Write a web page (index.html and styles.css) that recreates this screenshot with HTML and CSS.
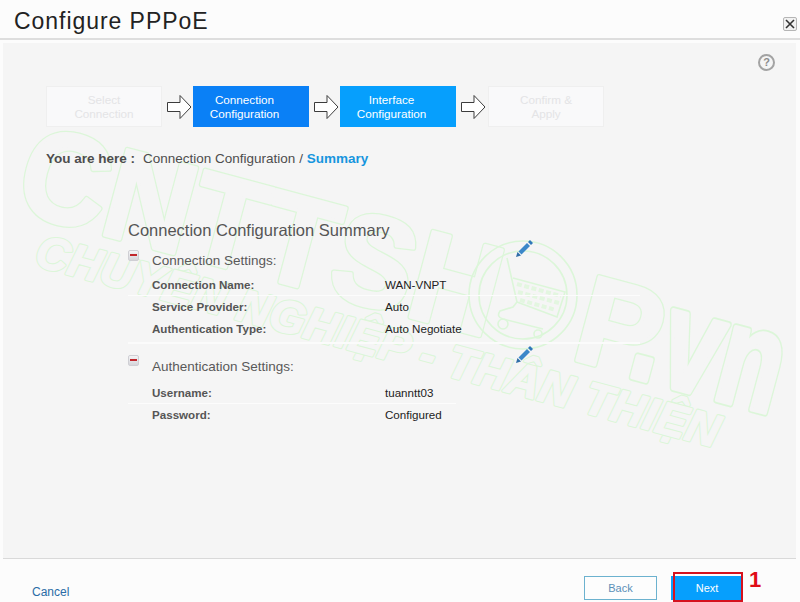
FILE: index.html
```html
<!DOCTYPE html>
<html lang="en">
<head>
<meta charset="utf-8">
<title>Configure PPPoE</title>
<link rel="stylesheet" href="styles.css">
</head>
<body>
<div class="dialog">
  <header class="header">
    <h1 class="title">Configure PPPoE</h1>
    <button class="close" aria-label="Close">
      <svg width="10" height="10" viewBox="0 0 10 10"><path d="M1 1L9 9M9 1L1 9" stroke="#333" stroke-width="1.6" fill="none"/></svg>
    </button>
  </header>
  <main class="panel">
    <svg class="watermark" width="793" height="515" viewBox="0 0 793 515">
      <defs>
        <g id="wm-letters">
          <text class="wm-big" transform="translate(9 167) rotate(15)" font-size="128" textLength="492" lengthAdjust="spacingAndGlyphs">CNTTSH</text>
          <text class="wm-big" transform="translate(566 315) rotate(15)" font-size="125">P</text>
          <text class="wm-big" transform="translate(622 332) rotate(15) scale(1 1.35)" font-size="105">.vn</text>
          <text class="wm-small" transform="translate(30 222) rotate(15)" font-size="46" textLength="706" lengthAdjust="spacing">CHUYÊN NGHIỆP - THÂN THIỆN</text>
        </g>
      </defs>
      <use href="#wm-letters" class="wm-outer"/>
      <use href="#wm-letters" class="wm-inner"/>
      <g class="wm-cart">
        <circle cx="520" cy="252" r="54"/>
        <circle cx="520" cy="252" r="44"/>
        <path d="M504 215L514 259L510 264L497 268Q493 274 500 276L540 286M510 235L562 249L554 274L514 259"/>
        <circle cx="500" cy="281" r="5"/>
        <circle cx="535" cy="291" r="4"/>
        <path class="wm-grid" d="M514 241L558 253M515 249L556 260M517 257L553 267"/>
      </g>
    </svg>
    <div class="help-row">
      <span class="help">?</span>
    </div>
    <nav class="steps">
      <div class="step step-off">Select<br>Connection</div>
      <svg class="arrow" width="24" height="24" viewBox="0 0 24 24"><path d="M.5 7.5H13V.5L24 12L13 23.5V16.5H.5Z"/></svg>
      <div class="step step-done">Connection<br>Configuration</div>
      <svg class="arrow" width="24" height="24" viewBox="0 0 24 24"><path d="M.5 7.5H13V.5L24 12L13 23.5V16.5H.5Z"/></svg>
      <div class="step step-active">Interface<br>Configuration</div>
      <svg class="arrow" width="24" height="24" viewBox="0 0 24 24"><path d="M.5 7.5H13V.5L24 12L13 23.5V16.5H.5Z"/></svg>
      <div class="step step-off">Confirm &amp;<br>Apply</div>
    </nav>
    <p class="crumb"><b>You are here :</b><span class="crumb-path">Connection Configuration / <b class="crumb-now">Summary</b></span></p>
    <section class="summary">
      <h2 class="summary-title">Connection Configuration Summary</h2>
      <div class="group group-conn">
        <div class="group-head">
          <span class="minus"></span>
          <span class="group-name">Connection Settings:</span>
          <svg class="pencil" width="17" height="17" viewBox="0 0 17 17"><path d="M0 17L1.5 12L5 15.5Z" fill="#2f6ea8"/><path d="M2.5 11.5L11 3L14 6L5.5 14.5Z" fill="#3b87c9"/><path d="M12 2L14 0L17 3L15 5Z" fill="#2f78ba"/></svg>
        </div>
        <div class="row row-line"><span class="key">Connection Name:</span><span>WAN-VNPT</span></div>
        <div class="row"><span class="key">Service Provider:</span><span>Auto</span></div>
        <div class="row"><span class="key">Authentication Type:</span><span>Auto Negotiate</span></div>
      </div>
      <div class="group group-auth">
        <div class="group-head">
          <span class="minus"></span>
          <span class="group-name">Authentication Settings:</span>
          <svg class="pencil" width="17" height="17" viewBox="0 0 17 17"><path d="M0 17L1.5 12L5 15.5Z" fill="#2f6ea8"/><path d="M2.5 11.5L11 3L14 6L5.5 14.5Z" fill="#3b87c9"/><path d="M12 2L14 0L17 3L15 5Z" fill="#2f78ba"/></svg>
        </div>
        <div class="row row-line row-short"><span class="key">Username:</span><span>tuanntt03</span></div>
        <div class="row"><span class="key">Password:</span><span>Configured</span></div>
      </div>
    </section>
  </main>
  <footer class="footer">
    <a class="cancel" href="#">Cancel</a>
    <button class="btn btn-back">Back</button>
    <div class="next-wrap">
      <button class="btn btn-next">Next</button>
      <span class="callout">1</span>
    </div>
  </footer>
</div>
</body>
</html>
```

FILE: styles.css
```css
* { box-sizing: border-box; }
html, body { margin: 0; padding: 0; }
body {
  width: 800px;
  height: 602px;
  overflow: hidden;
  background: #fcfcfc;
  font-family: "Liberation Sans", Arial, sans-serif;
  color: #333;
}
.dialog { display: flex; flex-direction: column; height: 602px; }

.header {
  height: 40px;
  display: flex;
  justify-content: space-between;
  align-items: flex-end;
  padding: 0 3px 7px 14px;
  border-bottom: 2px solid #dedede;
}
.title {
  margin: 0 0 -5px;
  font-size: 23px;
  line-height: 30px;
  font-weight: 400;
  letter-spacing: .95px;
  color: #222;
}
.close {
  width: 14px;
  height: 14px;
  padding: 0;
  display: flex;
  align-items: center;
  justify-content: center;
  background: #f2f2f2;
  border: 1px solid #b5b5b5;
  border-radius: 2px;
}

.panel {
  position: relative;
  height: 516px;
  margin: 3px 4px 0 3px;
  padding: 11px 0 0 43px;
  background: #f5f5f5;
  border-bottom: 1px solid #d9d9d9;
}
.watermark { position: absolute; left: 0; top: 0; }
.wm-big, .wm-small {
  font-family: "Liberation Sans", Arial, sans-serif;
  font-weight: 700;
  stroke-linejoin: round;
}
.wm-big { stroke-width: var(--wm-big); }
.wm-small { font-style: italic; stroke-width: var(--wm-small); }
.wm-outer { fill: #dcf6d9; stroke: #dcf6d9; --wm-big: 6; --wm-small: 3.4; }
.wm-inner { fill: #f5f5f5; stroke: #f5f5f5; --wm-big: 3.4; --wm-small: 1.2; }
.wm-cart { fill: none; stroke: #dcf6d9; stroke-width: 1.6; }
.wm-grid { stroke: #e3f6e0; stroke-width: 4; stroke-dasharray: 5 2.5; }

.help-row, .steps, .crumb, .summary { position: relative; }

.help-row {
  display: flex;
  justify-content: flex-end;
  padding-right: 21px;
  height: 17px;
  margin-bottom: 15px;
}
.help {
  width: 17px;
  height: 17px;
  border: 2px solid #a3a3a3;
  border-radius: 50%;
  color: #8c8c8c;
  font-size: 11px;
  font-weight: 700;
  line-height: 13px;
  text-align: center;
}

.steps { display: flex; align-items: center; height: 41px; }
.step {
  width: 116px;
  height: 41px;
  display: flex;
  align-items: center;
  justify-content: center;
  text-align: center;
  font-size: 11.7px;
  line-height: 14px;
  color: #fff;
}
.step:last-child { margin-left: 1px; }
.step-off {
  background: #f9f9fa;
  border: 1px solid #efefef;
  color: #e4e4e6;
}
.step-done { background: #0a80f6; padding-right: 13px; }
.step-active { background: #069ffd; padding-right: 13px; }
.arrow { margin: 0 2px 0 5px; flex: none; }
.arrow path { fill: #fff; stroke: #3c3c3c; stroke-width: 1; }

.crumb {
  margin: 22px 0 0;
  font-size: 13.5px;
  line-height: 20px;
  color: #4d4d4d;
}
.crumb-path { margin-left: 8px; }
.crumb-now { color: #1795de; }

.summary { margin: 51px 0 0 82px; width: 512px; }
.summary-title {
  margin: 0 0 10px;
  font-size: 16.5px;
  line-height: 20px;
  font-weight: 400;
  color: #555;
}
.group-head { display: flex; height: 22px; margin: 0 107px 2px 0; }
.minus {
  position: relative;
  width: 11px;
  height: 11px;
  margin-right: 13px;
  border: 1px solid #cfcfd4;
  border-radius: 2px;
  background: linear-gradient(#f4f4f6, #d5d5da);
}
.minus::after {
  content: "";
  position: absolute;
  left: 1px;
  right: 1px;
  top: 3px;
  height: 2px;
  background: #c1272d;
}
.group-name { font-size: 13.5px; line-height: 22px; color: #595959; }
.pencil { margin: -10px 0 0 auto; flex: none; }

.row {
  display: flex;
  height: 22px;
  padding-left: 24px;
  font-size: 11.6px;
  line-height: 22px;
  color: #222;
}
.key { width: 233px; font-weight: 700; color: #555; }
.row-line { border-bottom: 1px solid #fcfcfc; }
.row-short { width: 328px; }
.group-conn { padding-bottom: 2px; border-bottom: 2px solid #fbfbfb; }
.group-auth { margin-top: 12px; }
.group-auth .group-head { margin-bottom: 4px; }
.group-auth .minus { margin-top: -1px; }

.footer {
  flex: 1;
  display: flex;
  align-items: flex-start;
  padding: 17px 57px 0 32px;
}
.cancel {
  margin: 8px auto 0 0;
  font-size: 12px;
  line-height: 16px;
  color: #2a6ca6;
  text-decoration: none;
}
.btn {
  width: 73px;
  height: 24px;
  padding: 0;
  font-family: inherit;
  font-size: 11px;
  border-radius: 0;
}
.btn-back {
  background: #fdfdfd;
  border: 1px solid #6cb2cf;
  color: #5b90b8;
}
.next-wrap { position: relative; margin-left: 14px; }
.next-wrap::after {
  content: "";
  position: absolute;
  left: 2px;
  right: 0;
  top: -4px;
  bottom: -2px;
  border: 2px solid #d5121e;
}
.btn-next {
  display: block;
  width: 72px;
  background: #069ffd;
  border: 0;
  color: #fff;
}
.callout {
  position: absolute;
  left: 78px;
  top: -9px;
  font-size: 22px;
  line-height: 26px;
  font-weight: 700;
  color: #e00d15;
}
```
